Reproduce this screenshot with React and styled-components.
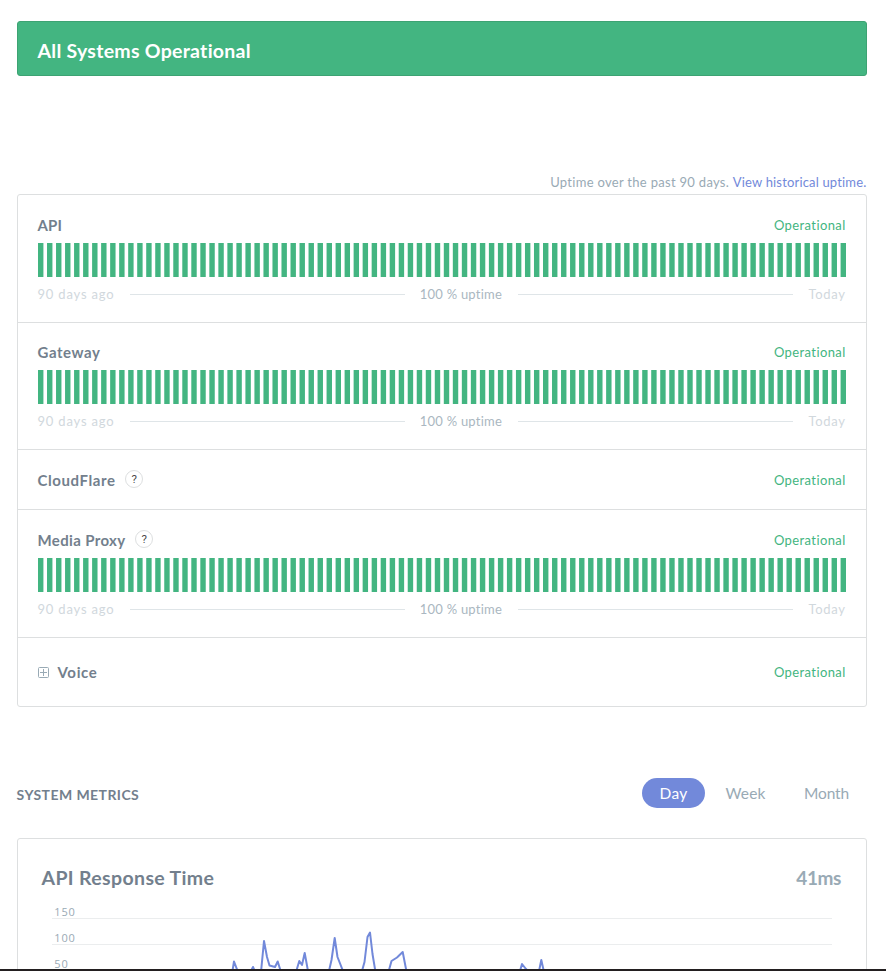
import React from "react";
import styled, { createGlobalStyle } from "styled-components";

const GlobalStyle = createGlobalStyle`
  * { box-sizing: border-box; }
  body { margin: 0; background: #fff; font-family: Lato, "Open Sans", sans-serif; }
`;

const Page = styled.div`
  height: 971px;
  overflow: hidden;
  display: flex;
  flex-direction: column;
`;

const Content = styled.main`
  flex: 1;
  min-height: 0;
  overflow: hidden;
  padding: 21px 19px 0 17px;
`;

const BottomEdge = styled.div`
  flex: none;
  height: 2px;
  background: #231f20;
`;

const StatusBanner = styled.div`
  height: 55px;
  padding: 4px 19.5px 0;
  display: flex;
  align-items: center;
  border: 1px solid #3da373;
  border-radius: 3px;
  background: #43b581;
  color: #fff;
  font-size: 19.5px;
  font-weight: 700;
  line-height: 24px;
  letter-spacing: 0.27px;
`;

const UptimeNote = styled.p`
  margin: 97px 0 0;
  height: 21px;
  padding-right: 0.5px;
  text-align: right;
  white-space: nowrap;
  color: #99aab5;
  font-size: 13px;
  line-height: 18px;
  letter-spacing: 0.3px;
`;

const NoteLink = styled.a`
  color: #7289da;
  letter-spacing: 0.17px;
`;

const Components = styled.section`
  border: 1px solid #dddfe0;
  border-radius: 3px;
`;

const ComponentRow = styled.div`
  height: ${(p) => p.$height}px;
  padding: ${(p) => p.$top}px 20px 0;
  border-bottom: 1px solid #dddfe0;
  &:last-child { border-bottom: 0; }
`;

const RowHead = styled.div`
  display: flex;
  align-items: center;
  height: 20px;
`;

const ComponentName = styled.span`
  margin-left: -0.5px;
  color: #737f8d;
  font-size: 15px;
  font-weight: 700;
  line-height: 20px;
  letter-spacing: ${(p) => p.$spacing}px;
`;

const ComponentStatus = styled.span`
  margin-left: auto;
  color: #43b581;
  font-size: 13px;
  line-height: 20px;
  letter-spacing: 0.4px;
  margin-right: 0.3px;
`;

const HelpBadge = styled.span`
  width: 18px;
  height: 18px;
  margin: -3px 0 0 9.6px;
  display: flex;
  align-items: center;
  justify-content: center;
  border: 1px solid #dddfe0;
  border-radius: 50%;
  color: #4a4a4a;
  font: 400 11.5px/16px Roboto, sans-serif;
  padding-top: 1px;
`;

const ExpandIcon = styled.svg`
  width: 11px;
  height: 11px;
  margin-right: 9px;
  fill: none;
  stroke: #99aab5;
`;

const UptimeChart = styled.svg`
  display: block;
  width: 808px;
  height: 34px;
  margin-top: 8px;
  fill: #43b581;
`;

const Legend = styled.div`
  height: 18px;
  margin-top: 8px;
  display: flex;
  align-items: center;
  font-size: 13px;
  line-height: 18px;
  color: #d1d8dd;
`;

const LegendStart = styled.span`
  width: 76px;
  margin-left: -0.5px;
  white-space: nowrap;
  letter-spacing: 0.8px;
`;

const LegendMiddle = styled.span`
  width: 82px;
  white-space: nowrap;
  color: #aab7c1;
  letter-spacing: 0.24px;
`;

const LegendEnd = styled.span`
  width: 38px;
  padding-left: 0.6px;
  white-space: nowrap;
  letter-spacing: 0.65px;
`;

const LegendLine = styled.span`
  flex: 1;
  height: 1px;
  margin: 0 15px 0 16px;
  background: #dfe5e8;
`;

const MetricsHeader = styled.div`
  margin-top: 71px;
  height: 30px;
  display: flex;
  align-items: center;
`;

const MetricsTitle = styled.h2`
  margin: 4px 0 0 -0.5px;
  color: #737f8d;
  font-size: 14px;
  font-weight: 700;
  line-height: 18px;
  letter-spacing: 0.43px;
`;

const PeriodTabs = styled.div`
  margin-left: auto;
  display: flex;
`;

const PeriodTab = styled.button`
  width: ${(p) => p.$width}px;
  height: 30px;
  padding: 0 0 1px;
  border: 0;
  border-radius: 15px;
  background: ${(p) => (p.$active ? "#7289da" : "transparent")};
  color: ${(p) => (p.$active ? "#fff" : "#99aab5")};
  font: 400 15.5px Lato, sans-serif;
  letter-spacing: ${(p) => p.$spacing || 0.1}px;
`;

const MetricCard = styled.section`
  margin-top: 30px;
  height: 240px;
  border: 1px solid #dddfe0;
  border-radius: 3px;
`;

const MetricHead = styled.div`
  height: 24px;
  margin: 27px 25px 0 23.5px;
  display: flex;
  justify-content: space-between;
  font-size: 19.5px;
  font-weight: 700;
  line-height: 24px;
  color: #737f8d;
  letter-spacing: 0.36px;
`;

const MetricValue = styled.span`
  color: #99aab5;
  font-size: 19px;
  letter-spacing: -0.4px;
`;

const ResponseChart = styled.svg`
  display: block;
  width: 848px;
  height: 140px;
  font: 11px "Open Sans", sans-serif;
  letter-spacing: 0.8px;
`;

const GridLine = styled.line`
  stroke: #ebedee;
`;

const AxisLabel = styled.text`
  fill: #99aab5;
`;

const Series = styled.polyline`
  fill: none;
  stroke: #7289da;
  stroke-width: 2;
  stroke-linejoin: round;
`;

const components = [
  { name: "API", height: 128, top: 20, uptime: true, spacing: 0.1 },
  { name: "Gateway", height: 127, top: 19, uptime: true, spacing: 0.55 },
  { name: "CloudFlare", height: 60, top: 20, help: true, spacing: 0.58 },
  { name: "Media Proxy", height: 128, top: 20, help: true, uptime: true, spacing: 0.36 },
  { name: "Voice", height: 68, top: 24, group: true, spacing: 0.65 },
];

const days = Array.from({ length: 90 }, (_, i) => i);

const series =
  "214,92 226,86 231,80 234,61.5 238,72 246,74 251,71 253,67 257,76 261,72 264,41 267,57 269.5,65.5 275,67 277.7,61.5 281,72 290,76 296,72 299.3,61 302,65 304.7,53 308,71 316,70 322,74 329,71 331.5,60 334.7,38 337.5,57 343,71 352,80 362,71 364.5,62 367.5,37 370,32.5 372.5,54 375.5,72 386,76 389,70 391.5,61 397,57.5 402.7,52 406,69 411,76 440,82 480,80 518,78 522,64 526,69 531,74 536,72 538,76 541.3,60 544,72 552,82 600,86 660,84 720,87 800,84 832,88";

function UptimeBars() {
  return (
    <UptimeChart viewBox="0 0 448 34" preserveAspectRatio="none">
      {days.map((i) => (
        <rect key={i} x={i * 5} y="0" width="3" height="34" />
      ))}
    </UptimeChart>
  );
}

function UptimeLegend() {
  return (
    <Legend>
      <LegendStart>90 days ago</LegendStart>
      <LegendLine />
      <LegendMiddle>100 % uptime</LegendMiddle>
      <LegendLine />
      <LegendEnd>Today</LegendEnd>
    </Legend>
  );
}

function StatusRow({ item }) {
  return (
    <ComponentRow $height={item.height} $top={item.top}>
      <RowHead>
        {item.group && (
          <ExpandIcon viewBox="0 0 11 11">
            <rect x="0.5" y="0.5" width="10" height="10" rx="1" />
            <path d="M5.5 2v7M2 5.5h7" />
          </ExpandIcon>
        )}
        <ComponentName $spacing={item.spacing}>{item.name}</ComponentName>
        {item.help && <HelpBadge>?</HelpBadge>}
        <ComponentStatus>Operational</ComponentStatus>
      </RowHead>
      {item.uptime && <UptimeBars />}
      {item.uptime && <UptimeLegend />}
    </ComponentRow>
  );
}

export default function App() {
  return (
    <Page>
      <GlobalStyle />
      <Content>
        <StatusBanner>All Systems Operational</StatusBanner>
        <UptimeNote>
          Uptime over the past 90 days. <NoteLink>View historical uptime.</NoteLink>
        </UptimeNote>
        <Components>
          {components.map((item) => (
            <StatusRow key={item.name} item={item} />
          ))}
        </Components>
        <MetricsHeader>
          <MetricsTitle>SYSTEM METRICS</MetricsTitle>
          <PeriodTabs>
            <PeriodTab $width={63} $spacing={0.3} $active>Day</PeriodTab>
            <PeriodTab $width={81}>Week</PeriodTab>
            <PeriodTab $width={81} $spacing={-0.15}>Month</PeriodTab>
          </PeriodTabs>
        </MetricsHeader>
        <MetricCard>
          <MetricHead>
            API Response Time
            <MetricValue>41ms</MetricValue>
          </MetricHead>
          <ResponseChart viewBox="18 -10 848 140">
            {[150, 100, 50].map((v, i) => (
              <React.Fragment key={v}>
                <AxisLabel x="54.3" y={16 + i * 26}>{v}</AxisLabel>
                <GridLine x1="52" x2="832" y1={18.5 + i * 26} y2={18.5 + i * 26} />
              </React.Fragment>
            ))}
            <Series points={series} />
          </ResponseChart>
        </MetricCard>
      </Content>
      <BottomEdge />
    </Page>
  );
}
